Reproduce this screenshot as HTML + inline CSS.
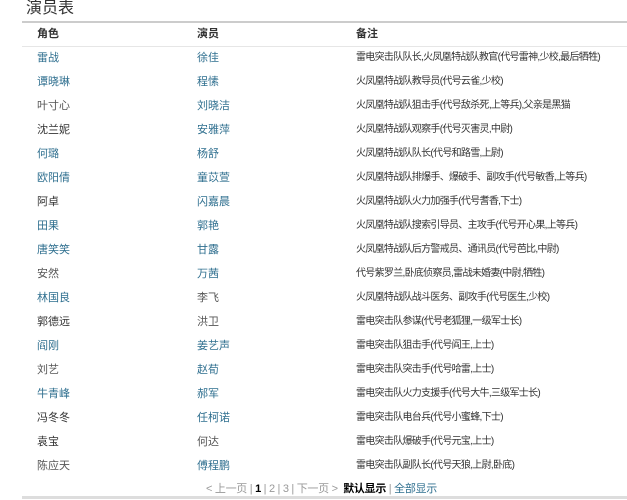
<!DOCTYPE html>
<html><head><meta charset="utf-8"><style>
body{margin:0;width:627px;height:500px;background:#fff;overflow:hidden;font-family:"Liberation Sans","Noto Sans CJK SC",sans-serif;font-size:11px;color:#333;position:relative}
.t{position:absolute;left:26px;top:-6px;font-size:16px;color:#333}
.l1{position:absolute;left:22px;right:0;top:21px;height:2px;background:#ccc}
.l2{position:absolute;left:22px;right:0;top:46px;height:1px;background:#e6e6e6}
.r{position:absolute;left:0;width:627px;height:14px;line-height:14px}
.r span{position:absolute;white-space:nowrap}
.a{left:37px}.b{left:197px}.c{left:356px;font-size:10px;letter-spacing:-0.7px}
.h .c{font-size:11px;letter-spacing:0}
.h{font-weight:bold}
.k{color:#2f6f8f}.g{color:#555}
.pg{position:absolute;top:480px;left:206px;white-space:nowrap;color:#999;font-size:11px;letter-spacing:-0.3px}
.bot{position:absolute;left:22px;right:0;top:496px;height:3px;background:#ddd}
</style></head><body>
<div class="t">演员表</div>
<div class="l1"></div>
<div class="r h" style="top:27px"><span class="a">角色</span><span class="b">演员</span><span class="c">备注</span></div>
<div class="l2"></div>
<div class="r" style="top:51px"><span class="a k">雷战</span><span class="b k">徐佳</span><span class="c">雷电突击队队长,火凤凰特战队教官(代号雷神,少校,最后牺牲)</span></div>
<div class="r" style="top:75px"><span class="a k">谭晓琳</span><span class="b k">程愫</span><span class="c">火凤凰特战队教导员(代号云雀,少校)</span></div>
<div class="r" style="top:99px"><span class="a g">叶寸心</span><span class="b k">刘晓洁</span><span class="c">火凤凰特战队狙击手(代号敌杀死,上等兵),父亲是黑猫</span></div>
<div class="r" style="top:123px"><span class="a">沈兰妮</span><span class="b k">安雅萍</span><span class="c">火凤凰特战队观察手(代号灭害灵,中尉)</span></div>
<div class="r" style="top:147px"><span class="a k">何璐</span><span class="b k">杨舒</span><span class="c">火凤凰特战队队长(代号和路雪,上尉)</span></div>
<div class="r" style="top:171px"><span class="a k">欧阳倩</span><span class="b k">童苡萱</span><span class="c">火凤凰特战队排爆手、爆破手、副攻手(代号敏香,上等兵)</span></div>
<div class="r" style="top:195px"><span class="a">阿卓</span><span class="b k">闪嘉晨</span><span class="c">火凤凰特战队火力加强手(代号耆香,下士)</span></div>
<div class="r" style="top:219px"><span class="a k">田果</span><span class="b k">郭艳</span><span class="c">火凤凰特战队搜索引导员、主攻手(代号开心果,上等兵)</span></div>
<div class="r" style="top:243px"><span class="a k">唐笑笑</span><span class="b k">甘露</span><span class="c">火凤凰特战队后方警戒员、通讯员(代号芭比,中尉)</span></div>
<div class="r" style="top:267px"><span class="a g">安然</span><span class="b k">万茜</span><span class="c">代号紫罗兰,卧底侦察员,雷战未婚妻(中尉,牺牲)</span></div>
<div class="r" style="top:291px"><span class="a k">林国良</span><span class="b g">李飞</span><span class="c">火凤凰特战队战斗医务、副攻手(代号医生,少校)</span></div>
<div class="r" style="top:315px"><span class="a">郭德远</span><span class="b g">洪卫</span><span class="c">雷电突击队参谋(代号老狐狸,一级军士长)</span></div>
<div class="r" style="top:339px"><span class="a k">阎刚</span><span class="b k">姜艺声</span><span class="c">雷电突击队狙击手(代号阎王,上士)</span></div>
<div class="r" style="top:363px"><span class="a g">刘艺</span><span class="b k">赵荀</span><span class="c">雷电突击队突击手(代号哈雷,上士)</span></div>
<div class="r" style="top:387px"><span class="a k">牛青峰</span><span class="b k">郝军</span><span class="c">雷电突击队火力支援手(代号大牛,三级军士长)</span></div>
<div class="r" style="top:411px"><span class="a">冯冬冬</span><span class="b k">任柯诺</span><span class="c">雷电突击队电台兵(代号小蜜蜂,下士)</span></div>
<div class="r" style="top:435px"><span class="a">袁宝</span><span class="b g">何达</span><span class="c">雷电突击队爆破手(代号元宝,上士)</span></div>
<div class="r" style="top:459px"><span class="a g">陈应天</span><span class="b k">傅程鹏</span><span class="c">雷电突击队副队长(代号天狼,上尉,卧底)</span></div>
<div class="pg">&lt; 上一页 | <b style="color:#000">1</b> | 2 | 3 | 下一页 &gt; &nbsp;<b style="color:#000">默认显示</b> | <span class="k">全部显示</span></div>
<div class="bot"></div>
</body></html>
